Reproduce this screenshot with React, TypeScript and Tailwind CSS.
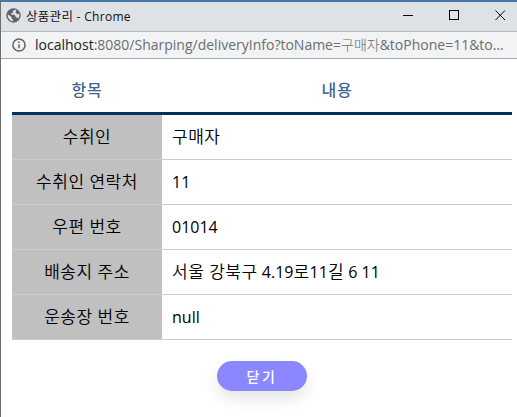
const rows = [
  { label: '수취인', value: '구매자' },
  { label: '수취인 연락처', value: '11' },
  { label: '우편 번호', value: '01014' },
  { label: '배송지 주소', value: '서울 강북구 4.19로11길 6 11' },
  { label: '운송장 번호', value: 'null' },
];

/* Hangul is set wider and lighter than the Latin text around it. */
function MixedText({ text }: { text: string }) {
  return (
    <>
      {text.split(/([가-힣]+(?: [가-힣]+)*)/).map((part, i) =>
        i % 2 === 1 ? (
          <span key={i} className="text-[17px] font-[350] tracking-[0.500px]">{part}</span>
        ) : (
          <span key={i}>{part}</span>
        ),
      )}
    </>
  );
}

function TitleBar() {
  return (
    <header className="flex h-[31px] items-center border-t-2 border-[#4477aa] bg-[#dee1e6] pl-[5px] text-[#111]">
      <svg className="mr-[5px] mb-[2px] size-[15px] shrink-0" viewBox="0 0 15 15">
        <circle cx="7.5" cy="7.5" r="7.2" fill="#5f6368" />
        <path
          d="M8.3 1.8 6.9 3.2v1.5L5.3 5.2v1.6h3.1l1.2 1.4v1.4h1.8l1.2 1.1a6 6 0 0 0 .5-5l-2.1.2-1.2-1.2V3.1l1-.6a6 6 0 0 0-2.5-.7ZM1.8 6.3a6 6 0 0 0 5.3 7V11.8L5.5 10.4V9.1L1.8 6.3Z"
          fill="#dee1e6"
        />
      </svg>
      <span className="flex-1 whitespace-nowrap text-[12px] leading-[16px]">
        <span className="text-[12.5px] tracking-[0.300px]">상품관리</span>
        <span className="tracking-[0.300px]"> - Chrome</span>
      </span>
      <svg className="mb-[2px] h-[11px] w-[104px] shrink-0" viewBox="0 0 104 11" fill="none" stroke="#000" shapeRendering="crispEdges">
        <path d="M0 5.5h10M46.500 .5h9v9h-9z" />
        <path d="m92.500 .5 9.500 9.500M102 .5l-9.500 9.500" shapeRendering="auto" />
      </svg>
      <span className="w-[10px] shrink-0" />
    </header>
  );
}

function AddressBar() {
  return (
    <div className="flex h-[28px] items-center border-y border-t-[#b5b8bc] border-b-[#a9abae] bg-[#f1f3f4] pl-[11px]">
      <svg className="mr-[9px] size-[14px] shrink-0" viewBox="0 0 14 14" fill="none" stroke="#5f6368" strokeWidth="1.5">
        <circle cx="7" cy="7" r="6.1" />
        <path d="M7 6.200v4M7 3.500v1.500" />
      </svg>
      <span className="whitespace-nowrap text-[14px] leading-[20px] text-[#6b6e72]">
        <span className="text-[#202124]">localhost</span>
        :8080/Sharping/deliveryInfo?toName=<span className="font-light">구매자</span>&amp;toPhone=11&amp;to...
      </span>
    </div>
  );
}

export default function App() {
  return (
    <div className="flex h-[417px] w-[517px] flex-col overflow-hidden border-l border-[#6e6e6e] bg-white font-['Open_Sans','Noto_Sans_CJK_KR',sans-serif]">
      <TitleBar />
      <AddressBar />
      <main className="flex flex-col pl-[11px]">
        <table className="mt-[9px] w-[500px] table-fixed border-separate border-spacing-0 text-[16px] leading-[24px] text-black">
          <thead>
            <tr className="h-[47px] text-[#3f6594]">
              <th className="w-[150px] border-b-[3px] border-[#03315c] p-0 text-[16px] font-medium tracking-[0.800px]">항목</th>
              <th className="border-b-[3px] border-[#03315c] p-0 text-[16px] font-medium tracking-[0.800px]">내용</th>
            </tr>
          </thead>
          <tbody>
            {rows.map((row) => (
              <tr key={row.label} className="h-[45px]">
                <td className="border-b border-[#ccc] bg-[#c0c0c0] p-0 text-center">
                  <MixedText text={row.label} />
                </td>
                <td className="border-b border-[#ccc] p-0 pl-[10px]">
                  <MixedText text={row.value} />
                </td>
              </tr>
            ))}
          </tbody>
        </table>
        <button className="mt-[21px] ml-[205px] h-[30px] w-[90px] rounded-full bg-[#8b87ff] text-[14px] font-medium tracking-[2.500px] text-white shadow-[0_8px_15px_rgba(0,0,0,0.1)]">
          닫기
        </button>
      </main>
    </div>
  );
}
